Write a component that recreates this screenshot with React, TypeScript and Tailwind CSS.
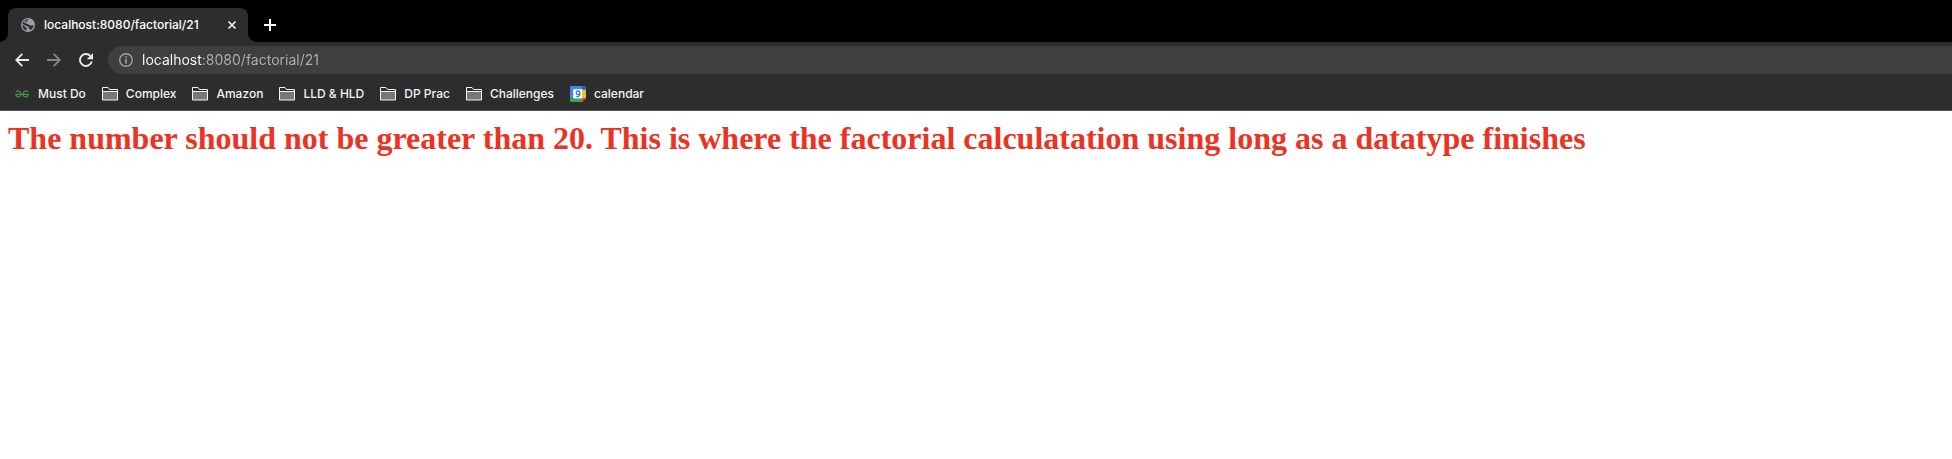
import React from "react";

function GlobeIcon() {
  return (
    <svg viewBox="0 0 24 24" className="size-3.5 shrink-0" aria-hidden="true">
      <circle cx="12" cy="12" r="12" fill="#9aa0a6" />
      <path
        d="M13.500 2.500c-2 .8-3 2-2.800 3.500.1 1-2.700 1-2.900 2.700-.1 1.500 1.800 1.300 3.400 1.500 2.300.3 2.400 2.600 4.600 2.700 2.300.1 3.700-.8 5.900-.4-.2 3.600-2.300 6.600-5.200 8-.4-1.400-1.400-2-3-2 .3-2.700-.8-4.400-3.500-4.500-2.800-.1-3.300-2.600-5.500-3.100-1-.2-1.600-.1-2.200.2.200-4.800 3.800-8.300 8.200-8.900z"
        fill="#2d2d2d"
      />
      <path d="M2.400 12.500c2 .2 3.600.6 4.400 2.500.5 1.300 1.300 1.700 2.700 1.700v4.900c-4-.9-7-4.500-7.100-9.100z" fill="#2d2d2d" />
      <path d="M6.500 5c1.500-1.300 3-2 4.500-2.200-1.300 1-1.700 2-1.500 2.900-1.700.3-2.400 1.300-2.600 2.700-1.200.2-2-.2-2.600-1z" fill="#9aa0a6" />
    </svg>
  );
}

function BackIcon() {
  return (
    <svg viewBox="0 0 14 14" className="size-3.5" fill="none" stroke="currentColor" strokeWidth="1.8" aria-hidden="true">
      <path d="M14 7H1.500M7.300.8 1.200 7l6.100 6.200" />
    </svg>
  );
}

function ForwardIcon() {
  return (
    <svg viewBox="0 0 14 14" className="size-3.5" fill="none" stroke="currentColor" strokeWidth="1.8" aria-hidden="true">
      <path d="M0 7h12.500M6.700.8 12.800 7l-6.100 6.200" />
    </svg>
  );
}

function ReloadIcon() {
  return (
    <svg viewBox="0 0 14 14" className="size-3.5" aria-hidden="true">
      <path d="M12.800 8.600A6 6 0 1 1 11.300 2.800" fill="none" stroke="currentColor" strokeWidth="1.9" />
      <path d="M14 0v6.200H7.800z" fill="currentColor" />
    </svg>
  );
}

function InfoIcon() {
  return (
    <svg viewBox="0 0 14 14" className="size-3.5 shrink-0" aria-hidden="true">
      <circle cx="7" cy="7" r="6.300" fill="none" stroke="#9aa0a6" strokeWidth="1.4" />
      <path d="M6.200 3.300h1.600v1.600H6.200zM6.200 6.100h1.600v4.600H6.200z" fill="#9aa0a6" />
    </svg>
  );
}

function CloseIcon() {
  return (
    <svg viewBox="0 0 8 8" className="size-2" fill="none" stroke="currentColor" strokeWidth="1.5" aria-hidden="true">
      <path d="m.5.5 7 7m0-7-7 7" />
    </svg>
  );
}

function PlusIcon() {
  return (
    <svg viewBox="0 0 12 12" className="size-3" fill="none" stroke="currentColor" strokeWidth="2" aria-hidden="true">
      <path d="M6 0v12M0 6h12" />
    </svg>
  );
}

function FolderIcon() {
  return (
    <svg viewBox="0 0 16 14" className="h-3.5 w-4 shrink-0" aria-hidden="true">
      <path d="M1 4h14v9H1z" fill="#777" />
      <path d="M.5.5H6L7.500 2.500h8v10.500H.5z" fill="none" stroke="#f4f4f4" strokeLinejoin="round" />
      <path d="M1 4.500h14" stroke="#f4f4f4" />
    </svg>
  );
}

function GeeksIcon() {
  return (
    <svg viewBox="0 0 16 16" className="size-4 shrink-0" fill="none" stroke="#43914b" strokeWidth="1.200" aria-hidden="true">
      <path d="M2.200 6c1-1.600 4.500-1.500 4.700 1.900.2 3.900-4.900 3.900-5 .5M13.800 6c-1-1.600-4.500-1.500-4.700 1.900-.2 3.900 4.900 3.900 5 .5M1.200 8.400h13.600" />
    </svg>
  );
}

function CalendarIcon() {
  return (
    <svg viewBox="0 0 16 16" className="size-4 shrink-0" aria-hidden="true">
      <path d="M1 0h11.400v12.400H0V1z" fill="#4285f4" />
      <path d="M12.400 0H15l1 1v2.600h-3.600z" fill="#1967d2" />
      <path d="M12.400 3.600H16v8.800h-3.600z" fill="#fbbc04" />
      <path d="M0 12.400h12.400V16H1l-1-1z" fill="#34a853" />
      <path d="M12.400 12.400H16L12.400 16z" fill="#ea4335" />
      <path d="M3.200 3.200h9.300v9.300H3.200z" fill="#fff" />
      <circle cx="8" cy="6.800" r="1.800" fill="none" stroke="#3c78e0" strokeWidth="1.300" />
      <path d="M9.800 6.800c.2 2.800-.8 4.200-3.500 3.700" fill="none" stroke="#3c78e0" strokeWidth="1.300" />
    </svg>
  );
}

const bookmarks = [
  { label: "Must Do", Icon: GeeksIcon },
  { label: "Complex", Icon: FolderIcon },
  { label: "Amazon", Icon: FolderIcon },
  { label: "LLD & HLD", Icon: FolderIcon },
  { label: "DP Prac", Icon: FolderIcon },
  { label: "Challenges", Icon: FolderIcon },
  { label: "calendar", Icon: CalendarIcon },
];

export default function App() {
  return (
    <div className="min-h-screen bg-white font-['Inter',sans-serif]">
      <header className="border-b border-[#5a5657] bg-[#2d2d2d]">
        <div className="flex h-[42px] items-end bg-black pl-2">
          <div className="relative flex h-[34px] w-60 items-center rounded-t-lg bg-[#2d2d2d] pr-3 pl-[13px] text-white">
            <span className="absolute bottom-0 -left-2 size-2 bg-[radial-gradient(circle_at_0_0,transparent_7.5px,#2d2d2d_8px)]" />
            <span className="absolute -right-2 bottom-0 size-2 bg-[radial-gradient(circle_at_100%_0,transparent_7.5px,#2d2d2d_8px)]" />
            <GlobeIcon />
            <span className="ml-[9px] flex-1 text-xs font-medium whitespace-nowrap">localhost:8080/factorial/21</span>
            <button type="button" aria-label="Close tab">
              <CloseIcon />
            </button>
          </div>
          <button type="button" aria-label="New tab" className="ml-4 flex h-[34px] items-center text-white">
            <PlusIcon />
          </button>
        </div>

        <div className="flex items-center pt-1 pl-[15px]">
          <nav aria-label="History" className="flex gap-[18px] text-[#ececec]">
            <button type="button" aria-label="Back">
              <BackIcon />
            </button>
            <button type="button" aria-label="Forward" className="text-[#858585]">
              <ForwardIcon />
            </button>
            <button type="button" aria-label="Reload">
              <ReloadIcon />
            </button>
          </nav>
          <div className="ml-[15px] flex h-7 flex-1 items-center gap-[9px] rounded-l-full bg-[#3f3f3f] pl-[11px]">
            <InfoIcon />
            <input
              type="text"
              aria-label="Address"
              defaultValue="localhost:8080/factorial/21"
              className="min-w-0 flex-1 bg-[linear-gradient(to_right,#fff_60px,#b0b0b0_60px)] bg-clip-text text-sm text-transparent outline-none"
            />
          </div>
        </div>

        <nav aria-label="Bookmarks" className="flex h-9 items-center gap-4 pt-[3px] pl-3.5">
          {bookmarks.map(({ label, Icon }) => (
            <a key={label} href="#" className="flex items-center gap-2 text-xs font-medium whitespace-nowrap text-[#f4f4f4]">
              <Icon />
              {label}
            </a>
          ))}
        </nav>
      </header>

      <main className="px-2 pt-2">
        <h1 className="font-['Liberation_Serif',serif] text-[32px] leading-[38px] font-bold text-[#eb3323]">
          The number should not be greater than 20. This is where the factorial calculatation using long as a datatype finishes
        </h1>
      </main>
    </div>
  );
}
